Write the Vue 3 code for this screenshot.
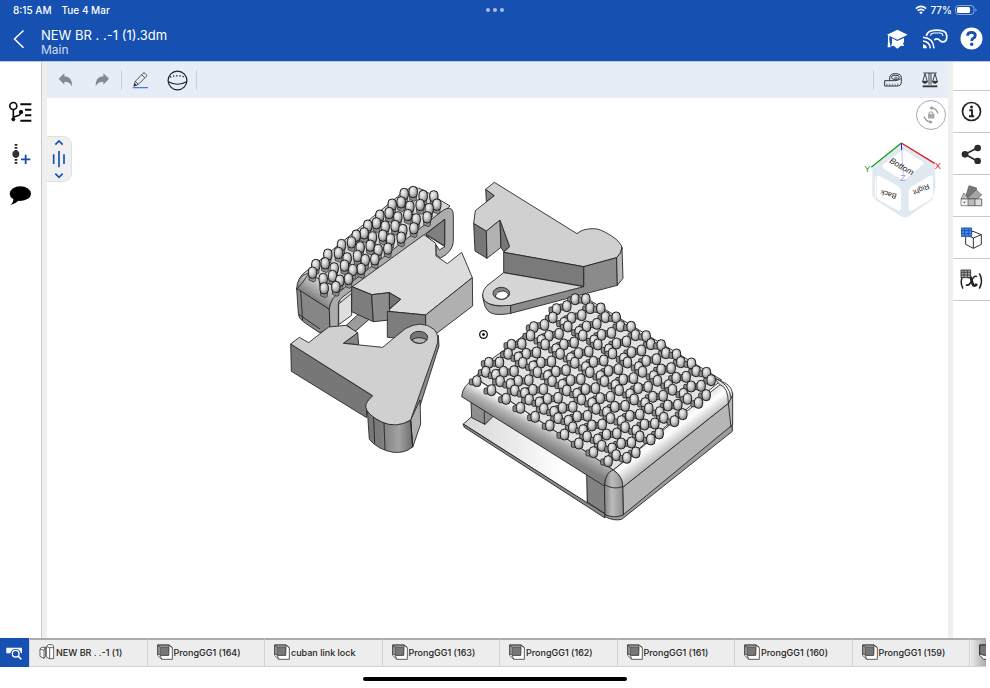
<script setup>
const tabs = ['ProngGG1 (164)', 'cuban link lock', 'ProngGG1 (163)', 'ProngGG1 (162)', 'ProngGG1 (161)', 'ProngGG1 (160)', 'ProngGG1 (159)']

// Each band of prongs is a lattice given by its four corners: [origin, end of row, last row origin, last row end]
const bands = [
  { c: [[65, 273], [459, 513], [335, 48], [738, 287]], rows: 5, n: 10 },
  { c: [[92, 245], [483, 495], [360, 27], [768, 270]], rows: 5, n: 10 },
  { c: [[101, 218], [542, 487], [304, 57], [753, 315]], rows: 4, n: 11 },
  { c: [[122, 254], [515, 503], [327, 98], [730, 338]], rows: 4, n: 10 },
  { c: [[392, 27], [754, 248], [392, 27], [754, 248]], rows: 1, n: 9 },
]
const mix = (a, b, t) => [a[0] + (b[0] - a[0]) * t, a[1] + (b[1] - a[1]) * t]
const bigProngs = bands
  .flatMap(({ c, rows, n }) =>
    Array.from({ length: rows * n }, (_, i) => {
      const k = rows > 1 ? Math.floor(i / n) / (rows - 1) : 0
      const t = (i % n) / (n - 1)
      return mix(mix(c[0], c[1], t), mix(c[2], c[3], t), k).map(Math.round)
    }),
  )
  .sort((a, b) => a[1] - b[1])

const smallProngs = [
  [354, 36], [327, 42], [384, 48], [416, 49], [318, 67], [291, 74], [375, 75], [425, 74], [344, 80], [402, 87],
  [282, 99], [254, 107], [338, 105], [396, 112], [308, 112], [363, 118], [244, 130], [218, 137], [300, 138],
  [356, 145], [270, 140], [323, 150], [207, 160], [183, 167], [263, 167], [318, 173], [232, 172], [286, 178],
  [169, 187], [139, 195], [225, 197], [278, 206], [195, 202], [249, 210], [130, 219], [98, 224], [187, 228],
  [239, 238], [156, 235], [210, 240], [90, 250], [62, 255], [148, 257], [198, 267], [117, 265], [173, 270],
  [52, 278], [112, 288], [160, 297], [84, 297], [134, 302], [122, 321], [87, 325],
].sort((a, b) => a[1] - b[1])
</script>

<template>
  <div class="app">
    <header class="top">
      <div class="status">
        <div class="status-left"><span>8:15 AM</span><span>Tue 4 Mar</span></div>
        <div class="dots"><i></i><i></i><i></i></div>
        <div class="status-right">
          <svg width="12" height="10" viewBox="0 0 12 10" fill="none" stroke="#fff" stroke-width="1.6">
            <path d="M.8 3.6Q6-.8 11.2 3.6M2.7 5.7Q6 3 9.3 5.7" /><path d="M4.2 7.2Q6 5.8 7.8 7.2L6 9.2z" fill="#fff" stroke="none" />
          </svg>
          <span>77%</span>
          <svg width="22" height="10" viewBox="0 0 22 10">
            <rect x=".5" y=".5" width="18.5" height="9" rx="3" fill="none" stroke="#8ba7d8" />
            <rect x="2" y="2" width="13" height="6" rx="1.5" fill="#fff" /><path d="M20.4 3.5q1.2.4 1.2 1.5t-1.2 1.5z" fill="#8ba7d8" />
          </svg>
        </div>
      </div>
      <div class="titlebar">
        <button class="back" aria-label="Back">
          <svg width="12" height="20" viewBox="0 0 12 20" fill="none" stroke="#fff" stroke-width="1.5"><path d="M10.5 1.5L1.5 10l9 8.8" /></svg>
        </button>
        <div class="title">
          <h1>NEW BR . .-1 (1).3dm</h1>
          <p>Main</p>
        </div>
        <button class="head-btn" aria-label="Learning center">
          <svg width="21" height="20" viewBox="383 84 63 60" fill="#fff">
            <path d="M414 86l31 15-31 15-31-15z" /><path d="M398 112l16 8 20-9v14l-4 1 5 9-10-1-11 9-11-9-8 2 3-10z" />
            <path d="M386 103l4 2v14l4 20h-9l1-20z" />
          </svg>
        </button>
        <button class="head-btn" aria-label="Cast to headset">
          <svg width="26" height="20" viewBox="484 85 78 60" fill="none" stroke="#fff" stroke-width="4.5">
            <path d="M497 106Q500 91 518 89Q545 86 555 96Q561 108 556 119Q547 128 538 120Q530 111 521 118" stroke-width="5" />
            <path d="M509 105q2-8 12-8h16q11 1 9 9" stroke-width="3.500" />
            <path d="M487 110q31 2 33 33M487 121q20 2 22 22" /><path d="M487 131q11 2 12 12h-12z" fill="#fff" stroke="none" />
          </svg>
        </button>
        <button class="head-btn" aria-label="Help">
          <svg width="23" height="23" viewBox="0 0 23 23"><circle cx="11.500" cy="11.500" r="11" fill="#fff" />
            <path d="M7.600 8.800Q7.600 5.400 11.400 5.400Q15.300 5.400 15.300 8.500Q15.300 10.200 13.300 11.200Q11.700 12 11.700 13.900" fill="none" stroke="#1650b0" stroke-width="2.800" />
            <circle cx="11.700" cy="17.200" r="1.700" fill="#1650b0" /></svg>
        </button>
      </div>
    </header>

    <main class="body">
      <nav class="left">
        <button aria-label="Feature tree">
          <svg width="23" height="22" viewBox="28 302 69 66" fill="none" stroke="#0b0b0b" stroke-width="5">
            <circle cx="41" cy="317" r="10.500" /><path d="M41 328v28M41 351l17-6q6-3 6-9" />
            <circle cx="41" cy="357" r="4.500" fill="#0b0b0b" stroke-width="3" /><circle cx="64" cy="335" r="5" fill="#0b0b0b" stroke-width="3" />
            <path d="M62 312h33M76 328h19M76 345h19M62 361h33" stroke-width="6" />
          </svg>
        </button>
        <button aria-label="Insert">
          <svg width="23" height="22" viewBox="28 428 69 66">
            <path d="M49 431v60" stroke="#222" stroke-width="8" stroke-dasharray="5 4" /><circle cx="48.500" cy="461" r="10.500" fill="#333" />
            <path d="M64 477h28M78 463v28" stroke="#1650b0" stroke-width="5.500" />
          </svg>
        </button>
        <button aria-label="Comments">
          <svg width="23" height="20" viewBox="28 556 69 60"><ellipse cx="62" cy="579" rx="32" ry="22" /><path d="M41 592q2 11-8 21 14-3 25-14z" /></svg>
        </button>
      </nav>
      <div class="gutter"></div>

      <section class="work">
        <div class="toolbar">
          <button aria-label="Undo">
            <svg width="15" height="15" viewBox="175 220 45 45" fill="#85888d"><path d="M177 237l17-16v9q25 1 23 31-5-15-23-15v9z" /></svg>
          </button>
          <button aria-label="Redo">
            <svg width="15" height="15" viewBox="175 220 45 45" fill="#85888d"><path d="M217 237l-17-16v9q-25 1-23 31 5-15 23-15v9z" /></svg>
          </button>
          <span class="sep"></span>
          <button aria-label="Sketch">
            <svg width="17" height="17" viewBox="398 215 51 51" fill="none" stroke="#333" stroke-width="2.500">
              <path d="M404 257l4-14 23-24q3-3 6 0l4 4q2 3 0 5l-24 24zM408 243l9 9M427 223l9 9" /><path d="M404 257l2-7 5 5z" fill="#333" />
              <path d="M400 262h46" stroke="#3a75c9" stroke-width="3.500" />
            </svg>
          </button>
          <button aria-label="Surface">
            <svg width="21" height="21" viewBox="0 0 21 21" fill="none" stroke="#222" stroke-width="1.200">
              <circle cx="10.500" cy="10.500" r="9.400" /><path d="M1 11.500q9.500 5.500 19 0" /><path d="M3 7.200q7.500-3 15 0" stroke-dasharray="1.200 2" stroke-width="1.400" />
            </svg>
          </button>
          <span class="sep"></span>
          <span class="space"></span>
          <span class="sep"></span>
          <button aria-label="Measure">
            <svg width="18" height="14" viewBox="371 218 54 42" fill="none" stroke="#333" stroke-width="3">
              <path d="M388 240v-8q1-12 17-12 18 0 18 12v12q0 13-12 13h-38v-16h30q10 0 18-6" /><ellipse cx="405" cy="231" rx="12" ry="6.500" />
              <ellipse cx="406" cy="232" rx="4" ry="2" stroke-width="2" /><path d="M380 257v-7M388 257v-7M396 257v-7M404 257v-7M412 256v-7" stroke-width="1.800" />
            </svg>
          </button>
          <button aria-label="Mass properties">
            <svg width="16" height="16" viewBox="485 216 48 48" fill="none" stroke="#333" stroke-width="2.800">
              <path d="M489 219h40M506 219v35M512 219v35M494 221l-7 24M494 221l7 24M524 221l-7 24M524 221l7 24" />
              <path d="M486 244h16q-2 6-8 6t-8-6zM516 244h16q-2 6-8 6t-8-6z" fill="#333" /><path d="M487 259h44" stroke-width="5.500" />
            </svg>
          </button>
        </div>

        <div class="canvas">
          <svg class="model" viewBox="47 98 901 540" role="img" aria-label="3D model">
            <defs>
              <radialGradient id="ball" cx=".38" cy=".35" r=".75">
                <stop offset="0" stop-color="#f4f4f4" /><stop offset=".4" stop-color="#cfcfcf" /><stop offset=".75" stop-color="#969696" /><stop offset="1" stop-color="#6a6a6a" />
              </radialGradient>
              <linearGradient id="cyl"><stop offset="0" stop-color="#777" /><stop offset=".3" stop-color="#7c7c7c" /><stop offset=".7" stop-color="#a2a2a2" /><stop offset="1" stop-color="#6c6c6c" /></linearGradient>
              <linearGradient id="corner"><stop offset="0" stop-color="#808080" /><stop offset=".4" stop-color="#bcbcbc" /><stop offset="1" stop-color="#909090" /></linearGradient>
              <linearGradient id="rollL" gradientUnits="userSpaceOnUse" x1="270" y1="392" x2="238" y2="452">
                <stop offset="0" stop-color="#fff" /><stop offset=".5" stop-color="#b0b0b0" /><stop offset="1" stop-color="#808080" />
              </linearGradient>
              <linearGradient id="rollR" gradientUnits="userSpaceOnUse" x1="628" y1="412" x2="665" y2="462">
                <stop offset="0" stop-color="#e6e6e6" /><stop offset=".35" stop-color="#fff" /><stop offset="1" stop-color="#bcbcbc" />
              </linearGradient>
              <linearGradient id="floor"><stop offset="0" stop-color="#d6d6d6" /><stop offset=".8" stop-color="#fff" /></linearGradient>
              <linearGradient id="cap" gradientUnits="userSpaceOnUse" x1="130" y1="330" x2="90" y2="390">
                <stop offset="0" stop-color="#e0e0e0" /><stop offset="1" stop-color="#727272" />
              </linearGradient>
            </defs>

            <!-- narrow link with open frame -->
            <g class="part" transform="translate(280 170) scale(.33333)">
              <path d="M55 345Q55 318 80 303L375 62Q400 45 430 60L510 108 190 400z" fill="#d6d6d6" />
              <path d="M50 358Q50 320 82 310L190 362Q152 385 148 418z" fill="url(#cap)" />
              <path d="M50 355L148 418 150 478 118 488 70 455Q55 445 55 430z" fill="#868686" />
              <path d="M62 363L68 452M50 358Q68 340 88 308M55 432L120 477" fill="none" />
              <path d="M200 465l52-48 28 20-55 48z" fill="#9b9b9b" />
              <path d="M148 418Q150 385 185 360L480 128Q504 108 515 118 521 124 520 150L520 215Q518 245 482 264L468 254 468 224 482 234Q494 232 494 222V148L200 372Q175 388 175 402V468L150 476z" fill="#acacac" />
              <path d="M176 402L215 370V436L176 464z" fill="#dedede" />
              <path d="M438 192L494 148V228z" fill="#808080" />
              <path d="M438 195L495 230 478 240 468 224z" fill="#fff" />
              <path d="M217 350L432 194 467 220 468 258 502 281 545 247 577 323 437 435 322 424 362 388 328 368 275 374z" fill="#dcdcdc" />
              <path d="M215 350L275 374 280 455 215 425z" fill="#7d7d7d" />
              <path d="M275 374L328 368 330 450 280 455z" fill="#8d8d8d" />
              <path d="M328 368L362 388 328 416z" fill="#747474" />
              <path d="M322 424L437 435V510L322 502z" fill="#7d7d7d" />
              <path d="M437 435L577 323 578 408 437 515z" fill="#b0b0b0" />
            </g>
            <g transform="translate(295 180) scale(.33333)">
              <g v-for="(p, i) in smallProngs" :key="i" class="prong" :transform="`translate(${p[0]} ${p[1]})`">
                <path d="M-10 4V22L4 28 10 24V4z" fill="#8c8c8c" stroke-width="2" /><rect x="-12" y="-17" width="25" height="34" rx="12" fill="url(#ball)" />
              </g>
            </g>

            <!-- lower left clasp -->
            <g class="part" transform="translate(280 310) scale(.33333)">
              <path d="M32 102L278 258 260 290V323L34 184z" fill="#777" />
              <path d="M475 76L477 108 420 288 398 340 388 330z" fill="#8e8e8e" />
              <path d="M392 330L420 270 422 342 398 412z" fill="#b0b0b0" />
              <path d="M261 285Q265 320 310 338 350 352 392 332L398 410Q378 430 340 427 295 420 268 388z" fill="url(#cyl)" />
              <path d="M281 322L284 400M312 338L315 420M392 332L398 410" />
              <path d="M190 100L233 68 236 104z" fill="#858585" />
              <path d="M32 102L58 82 86 98 146 51 198 46 233 68 190 100 308 112 376 56Q425 28 462 58 482 78 468 114L392 330Q350 356 305 336 235 300 268 268L278 257z" fill="#d0d0d0" />
              <ellipse cx="417" cy="82" rx="26" ry="18" fill="#777" /><path d="M396 89q20-12 44 0-8 12-23 11t-21-11z" fill="#b8b8b8" />
            </g>

            <!-- upper right clasp -->
            <g class="part" transform="translate(465 170) scale(.33333)">
              <path d="M62 58L88 77 64 95z" fill="#858585" />
              <path d="M26 160L64 183 66 265 30 243z" fill="#777" />
              <path d="M64 183L105 150 108 232 66 265z" fill="#b1b1b1" />
              <path d="M105 150L134 230 116 245 108 232z" fill="#777" />
              <path d="M88 37L336 191Q352 176 385 176 405 175 440 198 470 218 471 235 470 250 455 263L356 290 116 247 134 230 105 150 64 183 26 160 31 122 88 77 62 58z" fill="#d0d0d0" />
              <path d="M53 372Q52 404 100 408L137 405V430Q100 437 80 430 55 420 53 372z" fill="#a5a5a5" />
              <path d="M356 290L455 263 457 346 137 430V405L356 348z" fill="#8b8b8b" />
              <path d="M455 263Q470 250 471 232L474 325 457 346z" fill="#b8b8b8" />
              <path d="M116 247L356 290V349L116 308z" fill="#7a7a7a" />
              <path d="M116 308L356 350 137 406Q80 412 59 393 44 370 66 347z" fill="#d6d6d6" />
              <ellipse cx="109" cy="370" rx="25" ry="18" fill="#858585" /><path d="M91 379q3-16 25-16 9 1 14 10-4 14-20 15-12 0-19-9z" fill="#fff" />
            </g>

            <!-- wide link -->
            <g class="part" transform="translate(455 290) scale(.33333)">
              <path d="M25 402L50 380 90 403 116 372 397 555V640z" fill="url(#floor)" />
              <path d="M48 335L116 378 90 403 50 383z" fill="#8f8f8f" /><path d="M88 360V403" />
              <path d="M24 402L450 672V684L28 412z" fill="#8a8a8a" />
              <path d="M395 552L450 585 452 672 397 636z" fill="#828282" />
              <path d="M60 262L100 215 360 22 395 25 800 270 475 540z" fill="#e2e2e2" />
              <path d="M20 320Q22 285 62 265L475 540Q450 555 448 588z" fill="url(#rollL)" />
              <path d="M503 672L832 398V424L500 688Q478 694 450 680V672z" fill="#9c9c9c" />
              <path d="M503 592L820 340 833 310V404L505 674z" fill="#b6b6b6" />
              <path d="M475 540L795 284 775 262 812 280Q832 292 833 315L820 340 503 592Q502 558 475 540z" fill="url(#rollR)" />
              <path d="M795 284Q820 292 820 340L828 412M775 262Q825 282 828 325" fill="none" />
              <path d="M448 588Q452 545 475 540 505 560 503 592L505 675Q478 686 450 674z" fill="url(#corner)" />
              <path d="M448 584Q476 600 503 590" fill="none" />
            </g>
            <g transform="translate(455 290) scale(.33333)">
              <g v-for="(p, i) in bigProngs" :key="i" class="prong" :transform="`translate(${p[0]} ${p[1]})`">
                <rect x="-22" y="-6" width="18" height="18" rx="4" fill="#8a8a8a" stroke-width="2.400" /><rect x="-12" y="-16" width="25" height="33" rx="12" fill="url(#ball)" />
              </g>
            </g>

            <circle cx="483.500" cy="334.500" r="3.800" fill="#fff" stroke="#111" stroke-width="1.300" />
            <circle cx="483.500" cy="334.500" r="1.400" fill="#111" />
          </svg>

          <button class="handle" aria-label="Rollback bar">
            <svg width="18" height="40" viewBox="152 415 54 120" fill="none" stroke="#1650b0" stroke-width="5">
              <path d="M168 432l11-11 11 11M168 519l11 11 11-11M179 451v49M163 461v29M194 461v29" />
            </svg>
          </button>

          <button class="lock" aria-label="Lock rotation">
            <svg width="18" height="18" viewBox="0 0 18 18" fill="none" stroke="#999" stroke-width="1.200">
              <path d="M8 2q6-.5 8 5.500M10 16q-6 .5-8-5.500" /><path d="M7.500 2l3-2v4zM10.500 16l-3-2v4z" fill="#999" stroke="none" />
              <path d="M7.200 8V7q1.800-2.500 3.600 0v1" /><rect x="6" y="8" width="6.500" height="4.500" fill="#aaa" stroke="none" />
            </svg>
          </button>

          <svg class="cube" viewBox="36 114 246 246" role="img" aria-label="View cube">
            <path d="M154 128L254 192 257 260 246 300 172 352 158 352 76 300 67 286V205z" fill="#e1e9f0" />
            <path d="M154 152Q160 149 167 153L216 184Q226 190 216 196L168 236Q158 242 148 235L101 206Q94 200 101 193z" fill="#fff" />
            <path d="M80 234Q80 222 92 230L140 256Q153 262 153 276V324Q152 336 141 330L92 303Q80 297 80 286z" fill="#fff" />
            <path d="M176 278Q176 265 188 258L234 230Q246 223 246 235V284Q246 296 236 302L188 331Q176 336 176 323z" fill="#fff" />
            <path d="M76 230V296M247 226V290" stroke="#fff" stroke-width="3" />
            <path d="M154 130L160 226" stroke="#aaa5ff" stroke-width="2" /><path d="M154 130L155 150" stroke="#2424d8" stroke-width="3" />
            <path d="M154 129L64 202" stroke="#1a9a1a" stroke-width="4" /><path d="M154 129L254 190" stroke="#d61b1b" stroke-width="4" />
            <text transform="translate(117 187) rotate(30)" font-size="25" font-style="italic">Bottom</text>
            <text transform="translate(141 283) rotate(197)" font-size="22">Back</text>
            <text transform="translate(234 251) rotate(156)" font-size="22">Right</text>
            <text x="43" y="217" font-size="28" class="y">Y</text><text x="254" y="207" font-size="28" class="x">X</text><text x="150" y="243" font-size="28" class="z">Z</text>
          </svg>
        </div>
      </section>

      <div class="gutter"></div>
      <nav class="right">
        <button aria-label="Information">
          <svg width="21" height="21" viewBox="0 0 21 21" fill="none" stroke="#222" stroke-width="1.700"><circle cx="10.500" cy="10.500" r="9" />
            <circle cx="10.500" cy="6" r="1.500" fill="#222" stroke="none" /><path d="M8.300 9.200h2.700v6M8 15.300h5.200" stroke-width="1.900" /></svg>
        </button>
        <button aria-label="Share">
          <svg width="22" height="20" viewBox="334 130 66 60" fill="#2b2b2b"><path d="M384 141l-38 20 38 21" fill="none" stroke="#2b2b2b" stroke-width="5" /><circle cx="384" cy="142" r="10" /><circle cx="346" cy="161" r="10" /><circle cx="384" cy="181" r="10" /></svg>
        </button>
        <button aria-label="Appearance">
          <svg width="23" height="22" viewBox="332 255 69 66" stroke="#555" stroke-width="2">
            <path d="M347 297l12-40 23 7-10 33z" fill="#777" /><path d="M352 297l28-28 17 16-14 12z" fill="#a5a5a5" /><path d="M335 297l9-18 14 18z" fill="#c4c4c4" /><path d="M335 297h62v20h-62z" fill="#f2f2f2" />
            <path d="M356 297h21v20h-21z" fill="#bbb" /><path d="M377 297h20v20h-20z" fill="#ddd" /><circle cx="345" cy="307" r="1.500" />
          </svg>
        </button>
        <button aria-label="Configurations">
          <svg width="22" height="22" viewBox="332 379 66 66" fill="#fff" stroke="#222" stroke-width="2.800">
            <path d="M368 392l25 10v29l-24 12-23-12v-29zM346 402l23 10 24-10M369 412v31" /><path d="M333 382h31v25h-31z" fill="#4b8be8" stroke="#174ea6" />
            <path d="M343 382v25M354 382v25M333 390h31M333 399h31" stroke="#174ea6" stroke-width="2.500" />
          </svg>
        </button>
        <button aria-label="Variables">
          <svg width="23" height="21" viewBox="331 505 69 63" fill="none" stroke="#222" stroke-width="4.500">
            <path d="M340 523q-11 20 0 41M389 518q13 22 0 46" /><path d="M354 530q9-6 11 6l4 14q4 10 13 0" stroke-width="8" /><path d="M382 528q-8-5-15 10-8 20-18 14" stroke-width="5" />
            <path d="M334 508h29v23h-29z" fill="#aaa" stroke-width="2.500" /><path d="M343 508v23M353 508v23M334 515h29M334 523h29" stroke-width="2" />
          </svg>
        </button>
      </nav>
    </main>

    <footer>
      <div class="tabs">
        <button class="find" aria-label="Tab manager">
          <svg width="17" height="14" viewBox="20 60 51 42" fill="none" stroke="#fff" stroke-width="4"><path d="M21 65h47v17h-3q-3-13-16-13t-16 13h-12z" fill="#fff" stroke="none" /><circle cx="49" cy="83" r="10" /><path d="M56 90l10 10" stroke-width="5" /></svg>
        </button>
        <button class="tab">
          <svg width="16" height="16" viewBox="116 59 48 48" fill="#fff" stroke="#444" stroke-width="2.500"><path d="M119 74l4-5h12v28l-4 5-12-6zM119 74l12 4v24M131 78l4-9" /><path d="M138 67l6-6h11l5 4v38h-13l-9-5zM138 67l10 3v33M148 70h12" /></svg>
          <span>NEW BR . .-1 (1)</span>
        </button>
        <button v-for="t in tabs" :key="t" class="tab">
          <svg width="16" height="16" viewBox="467 58 48 48" stroke="#3d3d3d" stroke-width="2.500"><path d="M469 61h34l10 8v35h-32l-12-12z" fill="#fff" /><path d="M469 61h34v4l-1 27h-21l-12-4z" fill="#999" /><path d="M477 68h25v24h-25z" fill="#777" stroke-width="1.500" /><path d="M469 61l8 7M503 61l10 8M477 92l4 12" fill="none" /></svg>
          <span>{{ t }}</span>
        </button>
        <button class="tab last" aria-label="More tabs">
          <svg width="16" height="16" viewBox="467 58 48 48" stroke="#222" stroke-width="2.500"><path d="M469 61h34l10 8v35h-32l-12-12z" fill="#fff" /><path d="M469 61h34v31h-21l-13-4z" fill="#777" /></svg>
        </button>
      </div>
      <div class="home"><i></i></div>
    </footer>
  </div>
</template>

<style>
body { margin: 0; background: #fff; }
</style>

<style scoped>
.app { min-height: 100vh; display: flex; flex-direction: column; font-family: Inter, "Liberation Sans", sans-serif; color: #222; overflow: hidden; }
button { border: 0; padding: 0; margin: 0; background: none; font: inherit; color: inherit; display: flex; align-items: center; justify-content: center; cursor: pointer; }
svg { display: block; flex: none; }
h1, p { margin: 0; font-weight: 400; }

.top { background: #1650b0; color: #fff; border-bottom: 1px solid #b8c8e4; }
.status { height: 20px; display: grid; grid-template-columns: 1fr auto 1fr; align-items: center; padding: 0 13px; font-size: 10px; font-weight: 500; }
.status-left { display: flex; gap: 10px; }
.status-right { display: flex; justify-content: flex-end; align-items: center; gap: 3px; }
.dots { display: flex; gap: 3px; }
.dots i { width: 4px; height: 4px; border-radius: 50%; background: #a9bfe6; }
.titlebar { display: flex; align-items: center; height: 37px; padding-bottom: 4px; }
.back { width: 41px; height: 36px; padding-right: 3px; }
.title { flex: 1; padding-top: 6px; }
.title h1 { font-size: 13px; line-height: 16px; }
.title p { font-size: 12px; line-height: 14px; color: #d3def2; }
.head-btn { width: 37px; height: 37px; }

.body { flex: 1; display: flex; }
.left { width: 41px; padding-top: 29px; border-right: 1px solid #c9c9c9; background: #fff; }
.left button { width: 41px; height: 42px; }
.gutter { width: 5px; background: #efefef; }
.work { flex: 1; display: flex; flex-direction: column; min-width: 0; }
.toolbar { display: flex; align-items: center; height: 36px; background: #e7edf7; }
.toolbar button { width: 37px; height: 36px; }
.sep { width: 1px; height: 20px; background: #c5d0dc; }
.space { flex: 1; }
.canvas { flex: 1; position: relative; display: flex; min-height: 400px; }
.model { flex: 1; width: 100%; min-width: 0; }
.part { stroke: #222; stroke-width: 2.6; stroke-linejoin: round; }
.prong { stroke: #1c1c1c; stroke-width: 3; }

.handle { position: absolute; left: 0; top: 38px; width: 25px; height: 46px; background: #f0f0f0; border: 1px solid #dedede; border-left: 0; border-radius: 0 9px 9px 0; }
.lock { position: absolute; right: 2px; top: 2px; width: 30px; height: 30px; border: 1px solid #aaa; border-radius: 50%; }
.cube { position: absolute; right: 4px; top: 40px; width: 82px; height: 82px; overflow: visible; fill: #222; font-family: "Liberation Sans", sans-serif; }
.cube .x { fill: #d61b1b; }
.cube .y { fill: #1a9a1a; }
.cube .z { fill: #9b96ff; }

.right { width: 37px; margin-top: 28px; border-top: 1px solid #c9c9c9; background: #fff; }
.right button { width: 37px; height: 42px; border-bottom: 1px solid #c9c9c9; }

.tabs { display: flex; height: 29px; box-sizing: border-box; padding-right: 4px; overflow: hidden; }
.find { width: 29px; background: #1650b0; }
.tab { flex: 1; justify-content: flex-start; gap: 1px; padding: 0 0 2px 9px; background: #ededed; border-top: 2px solid #ababab; border-bottom: 1px solid #d2d2d2; border-left: 1px solid #d2d2d2; font-size: 9px; font-weight: 500; white-space: nowrap; min-width: 0; }
.tab.last { flex: 0 0 17px; box-sizing: border-box; overflow: hidden; justify-content: flex-start; background: linear-gradient(90deg, #ededed, #aaa); }
.home { height: 21px; display: flex; justify-content: center; align-items: center; }
.home i { width: 264px; height: 4px; margin-top: 3px; border-radius: 2px; background: #000; }
</style>
